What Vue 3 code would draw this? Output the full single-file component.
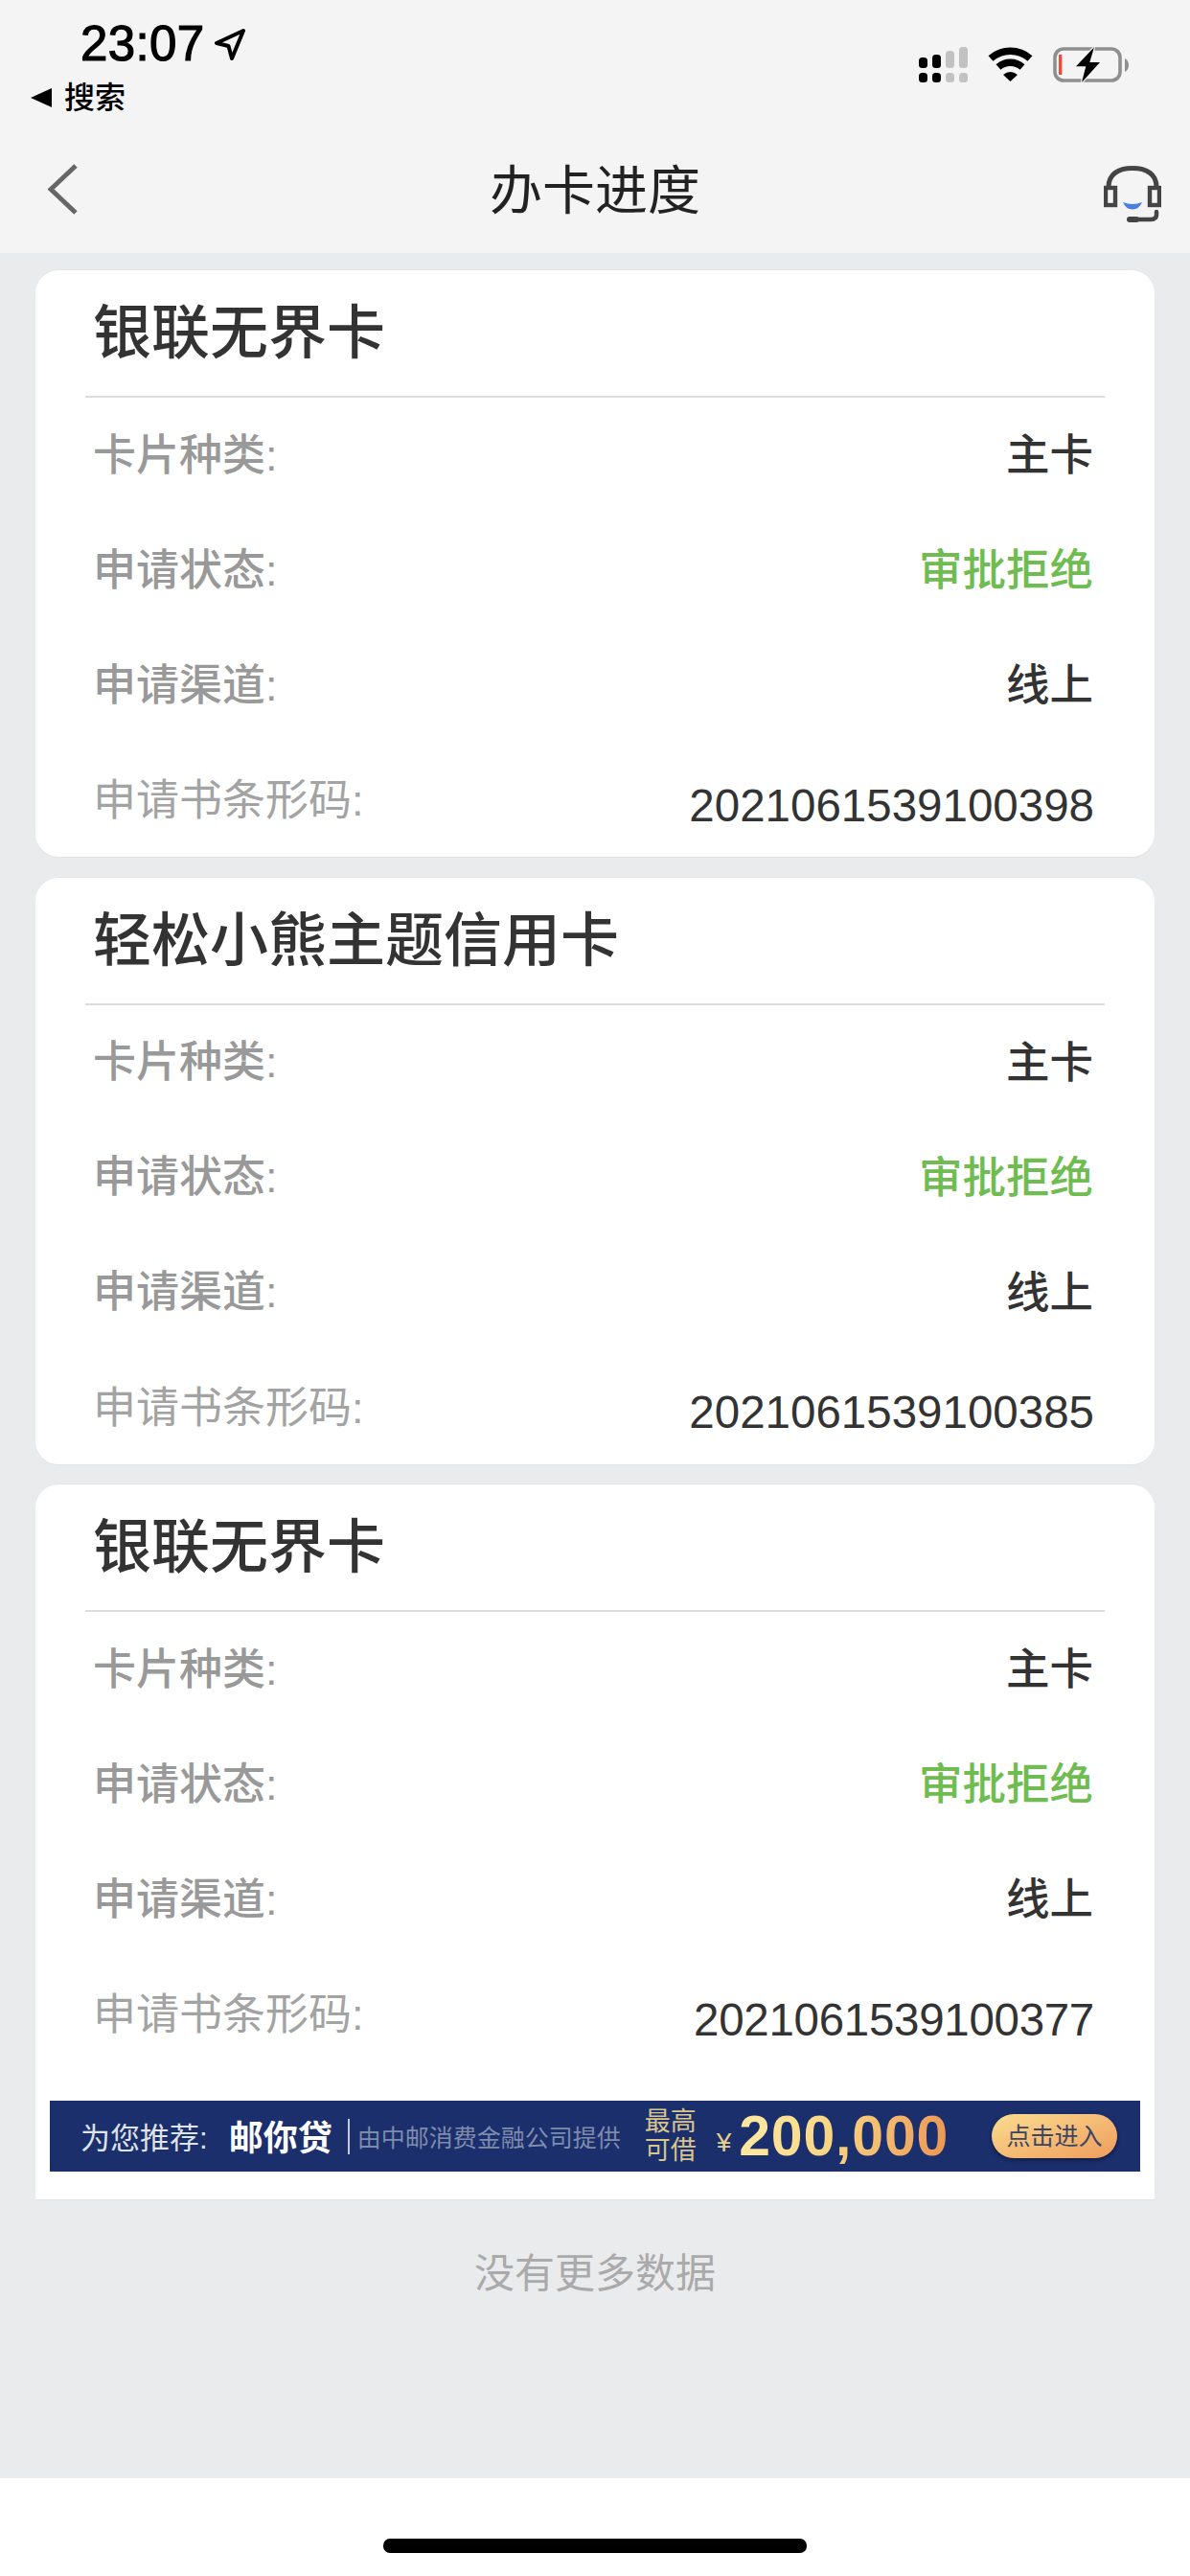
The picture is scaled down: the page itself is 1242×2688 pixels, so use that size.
<template>
  <div class="page">
    <header class="header">
      <div class="status">
        <div class="status-left">
          <div class="time-row">
            <span class="time">23:07</span>
            <svg class="loc" width="32" height="33" viewBox="0 0 32 33">
              <path d="M30 2 L2 15 L14.5 18 L18 31 Z" fill="none" stroke="#000" stroke-width="4" stroke-linejoin="round" />
            </svg>
          </div>
          <div class="back-row">
            <span class="back-tri"></span>
            <span class="back-text">搜索</span>
          </div>
        </div>
        <div class="status-right">
          <svg width="51" height="40" viewBox="0 0 51 40">
            <rect v-for="bar in signalBars" :key="bar.x" :x="bar.x" :y="bar.y" width="9" :height="bar.h" rx="3.5" :fill="bar.on ? '#000' : '#c2c2c2'" />
            <rect v-for="bar in signalBars" :key="'d' + bar.x" :x="bar.x" y="28" width="9" height="10" rx="3.5" :fill="bar.on ? '#000' : '#c2c2c2'" />
          </svg>
          <svg width="47" height="40" viewBox="0 0 47 40">
            <path d="M3 13 A31 31 0 0 1 44 13" fill="none" stroke="#000" stroke-width="7.5" />
            <path d="M11 22 A19 19 0 0 1 36 22" fill="none" stroke="#000" stroke-width="7.5" />
            <path d="M23.5 37 L16 30 Q23.5 24 31 30 Z" fill="#000" />
          </svg>
          <svg width="79" height="40" viewBox="0 0 79 40">
            <rect x="2" y="3" width="68" height="33" rx="9" fill="none" stroke="#8f8f8f" stroke-width="3.6" />
            <path d="M75 13 Q79 15 79 20 Q79 25 75 27 Z" fill="#8f8f8f" />
            <rect x="6" y="9" width="3.4" height="21" fill="#f04a3a" />
            <path d="M43 1.3 L24 21.3 L34.3 21.3 L30 38 L49 17 L38.3 17 Z" fill="#000" stroke="#f4f4f5" stroke-width="2.5" paint-order="stroke" />
          </svg>
        </div>
      </div>
      <div class="nav">
        <svg class="chevron" width="31" height="53" viewBox="0 0 31 53">
          <path d="M29 2 L3 26.5 L29 51" fill="none" stroke="#666" stroke-width="5" />
        </svg>
        <div class="nav-title">办卡进度</div>
        <svg class="headset" width="60" height="60" viewBox="0 0 60 60">
          <path d="M5 22 C5 9 15 2.5 30 2.5 S55 9 55 22" fill="none" stroke="#444" stroke-width="5" />
          <rect x="2" y="23" width="10" height="18" fill="none" stroke="#444" stroke-width="4.4" />
          <rect x="48" y="23" width="10" height="18" fill="none" stroke="#444" stroke-width="4.4" />
          <path d="M20 38 Q30 42 40 38 Q37 45.5 30 45.5 Q23 45.5 20 38 Z" fill="#4a7fe0" />
          <path d="M55 48 V51 Q55 56 49 56 H27" fill="none" stroke="#444" stroke-width="4.5" stroke-linecap="round" />
          <path d="M27 56 H34" stroke="#444" stroke-width="6" stroke-linecap="round" />
        </svg>
      </div>
    </header>

    <main class="list">
      <section v-for="card in cards" :key="card.code" class="card" :class="{ 'card-last': card.banner }">
        <div class="card-head">{{ card.title }}</div>
        <div class="row">
          <span class="label">卡片种类:</span>
          <span class="value">主卡</span>
        </div>
        <div class="row">
          <span class="label">申请状态:</span>
          <span class="value green">审批拒绝</span>
        </div>
        <div class="row">
          <span class="label">申请渠道:</span>
          <span class="value">线上</span>
        </div>
        <div class="row row-code">
          <span class="label">申请书条形码:</span>
          <span class="value code">{{ card.code }}</span>
        </div>
        <div v-if="card.banner" class="banner">
          <span class="ban-lead">为您推荐:</span>
          <span class="ban-name">邮你贷</span>
          <span class="ban-sep"></span>
          <span class="ban-from">由中邮消费金融公司提供</span>
          <span class="ban-most">最高<br />可借</span>
          <span class="ban-yen">¥</span>
          <span class="ban-amount">200,000</span>
          <span class="ban-btn">点击进入</span>
        </div>
      </section>
    </main>

    <div class="no-more">没有更多数据</div>
    <div class="home">
      <div class="home-bar"></div>
    </div>
  </div>
</template>

<script setup>
const signalBars = [
  { x: 0, y: 12, h: 11, on: true },
  { x: 14, y: 9, h: 14, on: true },
  { x: 28, y: 5, h: 18, on: false },
  { x: 42, y: 1, h: 22, on: false }
]

const cards = [
  { title: "银联无界卡", code: "2021061539100398" },
  { title: "轻松小熊主题信用卡", code: "2021061539100385" },
  { title: "银联无界卡", code: "2021061539100377", banner: true }
]
</script>

<style>
body {
  margin: 0;
}
</style>

<style scoped>
.page {
  width: 1242px;
  height: 2688px;
  background: #eaebed;
  font-family: "Liberation Sans", "Noto Sans CJK SC", sans-serif;
  overflow: hidden;
}

.header {
  height: 264px;
  background: #f4f4f5;
}

.status {
  height: 130px;
  display: flex;
  justify-content: space-between;
}

.status-left {
  padding: 21px 0 0 32px;
}

.time-row {
  display: flex;
  align-items: center;
  height: 50px;
  padding-left: 52px;
}

.time {
  font-size: 51px;
  line-height: 50px;
  letter-spacing: 0.4px;
  color: #000;
  -webkit-text-stroke: 1.2px #000;
}

.loc {
  margin-left: 10px;
}

.back-row {
  display: flex;
  align-items: center;
  height: 36px;
  margin-top: 13px;
}

.back-tri {
  width: 0;
  height: 0;
  border-top: 10px solid transparent;
  border-bottom: 10px solid transparent;
  border-right: 22px solid #000;
}

.back-text {
  margin-left: 13px;
  font-size: 32px;
  font-weight: 500;
  line-height: 36px;
  color: #000;
}

.status-right {
  display: flex;
  align-items: flex-start;
  padding: 48px 64px 0 0;
  gap: 21px;
}

.nav {
  height: 134px;
  display: grid;
  grid-template-columns: 1fr auto 1fr;
  align-items: center;
  padding: 0 30px;
}

.chevron {
  margin-left: 20px;
}

.nav-title {
  padding-bottom: 6px;
  font-size: 55px;
  color: #222;
}

.headset {
  justify-self: end;
  margin-top: 12px;
}

.list {
  display: flex;
  flex-direction: column;
  gap: 21.5px;
  padding: 18px 37px 0;
}

.card {
  background: #fff;
  border-radius: 24px;
  box-shadow: 0 1px 0 #e1e2e4, 0 -1px 0 #e4e5e7;
}

.card-last {
  height: 746px;
  border-radius: 24px 24px 0 0;
}

.card-head {
  height: 131px;
  margin: 0 52px;
  padding-left: 8px;
  border-bottom: 2px solid #ddd;
  font-size: 61px;
  font-weight: 500;
  line-height: 133px;
  color: #333;
}

.row {
  box-sizing: border-box;
  height: 120px;
  padding: 0 64px 8px 60px;
  display: flex;
  justify-content: space-between;
  align-items: center;
}

.label {
  font-size: 45px;
  font-weight: 500;
  color: #999;
}

.value {
  font-size: 45.5px;
  font-weight: 500;
  color: #333;
}

.green {
  color: #6fbc50;
}

.row-code {
  height: 119px;
  padding-bottom: 6px;
}

.row-code .label {
  font-weight: 400;
  color: #a3a3a3;
}

.code {
  margin-right: -1px;
  padding-top: 17px;
  font-size: 47.5px;
  font-weight: 400;
}

.card-last .code {
  letter-spacing: -0.3px;
}

.banner {
  height: 74px;
  margin: 31px 15px 0;
  padding: 0 24px 0 32px;
  background: #1b2f6d;
  display: flex;
  align-items: center;
}

.ban-lead {
  padding-bottom: 2px;
  font-size: 31px;
  color: #dfe3ea;
}

.ban-name {
  margin-left: 22px;
  padding-bottom: 2px;
  font-size: 36px;
  font-weight: 700;
  color: #fff;
}

.ban-sep {
  width: 2px;
  height: 37px;
  margin-left: 16px;
  background: #c5cad6;
}

.ban-from {
  margin-left: 8px;
  font-size: 25px;
  color: #7f8bab;
}

.ban-most {
  margin-left: 25px;
  font-size: 27px;
  line-height: 30px;
  color: #d9c48c;
}

.ban-yen {
  margin: 14px 0 0 21px;
  font-size: 28px;
  color: #e6d08f;
}

.ban-amount {
  margin-left: 8px;
  font-size: 59px;
  font-weight: 700;
  letter-spacing: 0.8px;
  line-height: 74px;
  background: linear-gradient(100deg, #fde79e 10%, #f9d582 45%, #ec9a58 95%);
  -webkit-background-clip: text;
  background-clip: text;
  color: transparent;
}

.ban-btn {
  margin-left: auto;
  width: 131px;
  height: 46px;
  border-radius: 23px;
  background: linear-gradient(160deg, #fbdc90, #ef9c5c);
  box-shadow: 0 2px 4px rgba(0, 0, 0, 0.45);
  font-size: 25px;
  line-height: 46px;
  text-align: center;
  color: #3c4464;
}

.no-more {
  height: 238px;
  padding-top: 53px;
  font-size: 42px;
  line-height: 50px;
  text-align: center;
  color: #aaa;
}

.home {
  height: 102px;
  background: #fff;
  display: flex;
  justify-content: center;
  padding-top: 63px;
  box-sizing: border-box;
}

.home-bar {
  width: 442px;
  height: 15px;
  border-radius: 7px;
  background: #000;
}
</style>
